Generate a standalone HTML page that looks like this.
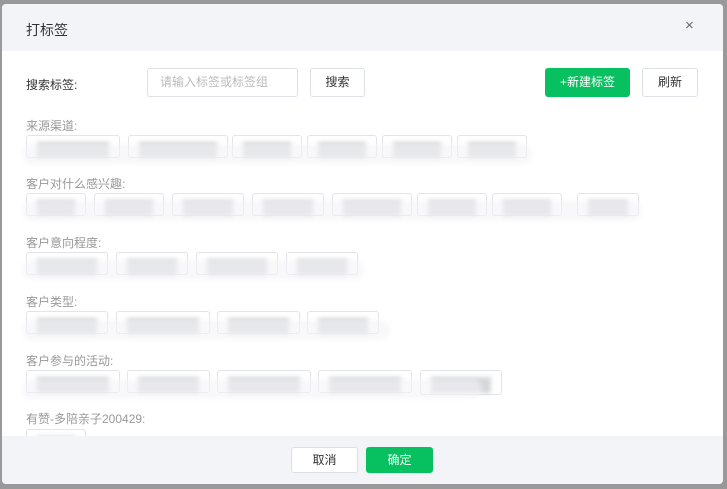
<!DOCTYPE html><html><head><meta charset="utf-8"><style>
*{margin:0;padding:0;box-sizing:border-box}
body{width:727px;height:489px;background:#999;position:relative;overflow:hidden;font-family:"Liberation Sans","Noto Sans CJK SC",sans-serif;font-size:12px}
.m{position:absolute;left:2px;top:4px;width:721px;height:480px;background:#fff;border-radius:4px;overflow:hidden}
.hd{position:absolute;left:0;top:0;width:100%;height:47px;background:#f3f4f8}
.ft{position:absolute;left:0;top:432px;width:100%;height:48px;background:#f3f4f8}
.a{position:absolute}
.lbl{position:absolute;left:24px;color:#999;font-size:12px}
.btn{position:absolute;border:1px solid #dcdfe6;border-radius:3px;background:#fff;text-align:center;color:#333;font-size:12px}
.g{background:#07c160;border-color:#07c160;color:#fff}
.t{position:absolute;border:1px solid #e2e4ea;border-radius:3px;background:#fff;height:23px}
.t i{position:absolute;left:10px;right:10px;top:6px;height:16px;background:#d6d7db;filter:blur(2px)}
.s{position:absolute;height:24px;background:rgba(243,244,247,.6);filter:blur(2px);border-radius:10px}
</style></head><body>
<div class="m">
<div class="hd"></div>
<div class="a" style="left:24px;top:16px;font-size:14px;color:#333">打标签</div>
<div class="a" style="left:683px;top:13px;font-size:15px;color:#666">×</div>
<div class="a" style="left:24px;top:72px;color:#333">搜索标签:</div>
<div class="btn" style="left:145px;top:64px;width:151px;height:29px;line-height:27px;color:#bbb;text-align:left;padding-left:12px">请输入标签或标签组</div>
<div class="btn" style="left:308px;top:64px;width:55px;height:29px;line-height:27px">搜索</div>
<div class="btn g" style="left:543px;top:64px;width:85px;height:29px;line-height:27px">+新建标签</div>
<div class="btn" style="left:640px;top:64px;width:56px;height:29px;line-height:27px">刷新</div>
<div class="lbl" style="top:113px">来源渠道:</div>
<div class="t" style="left:24px;top:131px;width:94px"><i></i></div>
<div class="t" style="left:126px;top:131px;width:100px"><i></i></div>
<div class="t" style="left:230px;top:131px;width:70px"><i></i></div>
<div class="t" style="left:305px;top:131px;width:70px"><i></i></div>
<div class="t" style="left:380px;top:131px;width:70px"><i></i></div>
<div class="t" style="left:455px;top:131px;width:70px"><i></i></div>
<div class="s" style="left:20px;top:140px;width:510px;height:20px"></div>
<div class="lbl" style="top:171px">客户对什么感兴趣:</div>
<div class="t" style="left:24px;top:189px;width:60px"><i></i></div>
<div class="t" style="left:92px;top:189px;width:70px"><i></i></div>
<div class="t" style="left:170px;top:189px;width:72px"><i></i></div>
<div class="t" style="left:250px;top:189px;width:72px"><i></i></div>
<div class="t" style="left:330px;top:189px;width:80px"><i></i></div>
<div class="t" style="left:415px;top:189px;width:70px"><i></i></div>
<div class="t" style="left:490px;top:189px;width:70px"><i></i></div>
<div class="t" style="left:575px;top:189px;width:62px"><i></i></div>
<div class="s" style="left:20px;top:197px;width:620px;height:20px"></div>
<div class="lbl" style="top:230px">客户意向程度:</div>
<div class="t" style="left:24px;top:248px;width:82px"><i></i></div>
<div class="t" style="left:114px;top:248px;width:72px"><i></i></div>
<div class="t" style="left:194px;top:248px;width:82px"><i></i></div>
<div class="t" style="left:284px;top:248px;width:72px"><i></i></div>
<div class="s" style="left:20px;top:256px;width:342px;height:20px"></div>
<div class="lbl" style="top:289px">客户类型:</div>
<div class="t" style="left:24px;top:307px;width:82px"><i></i></div>
<div class="t" style="left:114px;top:307px;width:94px"><i></i></div>
<div class="t" style="left:215px;top:307px;width:83px"><i></i></div>
<div class="t" style="left:305px;top:307px;width:72px"><i></i></div>
<div class="s" style="left:20px;top:316px;width:368px;height:20px"></div>
<div class="lbl" style="top:348px">客户参与的活动:</div>
<div class="t" style="left:24px;top:366px;width:94px"><i></i></div>
<div class="t" style="left:125px;top:366px;width:83px"><i></i></div>
<div class="t" style="left:215px;top:366px;width:94px"><i></i></div>
<div class="t" style="left:316px;top:366px;width:94px"><i></i></div>
<div class="t" style="left:418px;top:366px;width:82px;height:25px"><i></i></div>
<div class="s" style="left:20px;top:375px;width:460px;height:20px"></div>
<div class="lbl" style="top:406px">有赞-多陪亲子200429:</div>
<div class="t" style="left:24px;top:425px;width:60px"><i></i></div>
<div class="ft"></div>
<div class="btn" style="left:289px;top:443px;width:67px;height:26px;line-height:24px">取消</div>
<div class="btn g" style="left:364px;top:443px;width:67px;height:26px;line-height:24px">确定</div>
</div>
</body></html>
